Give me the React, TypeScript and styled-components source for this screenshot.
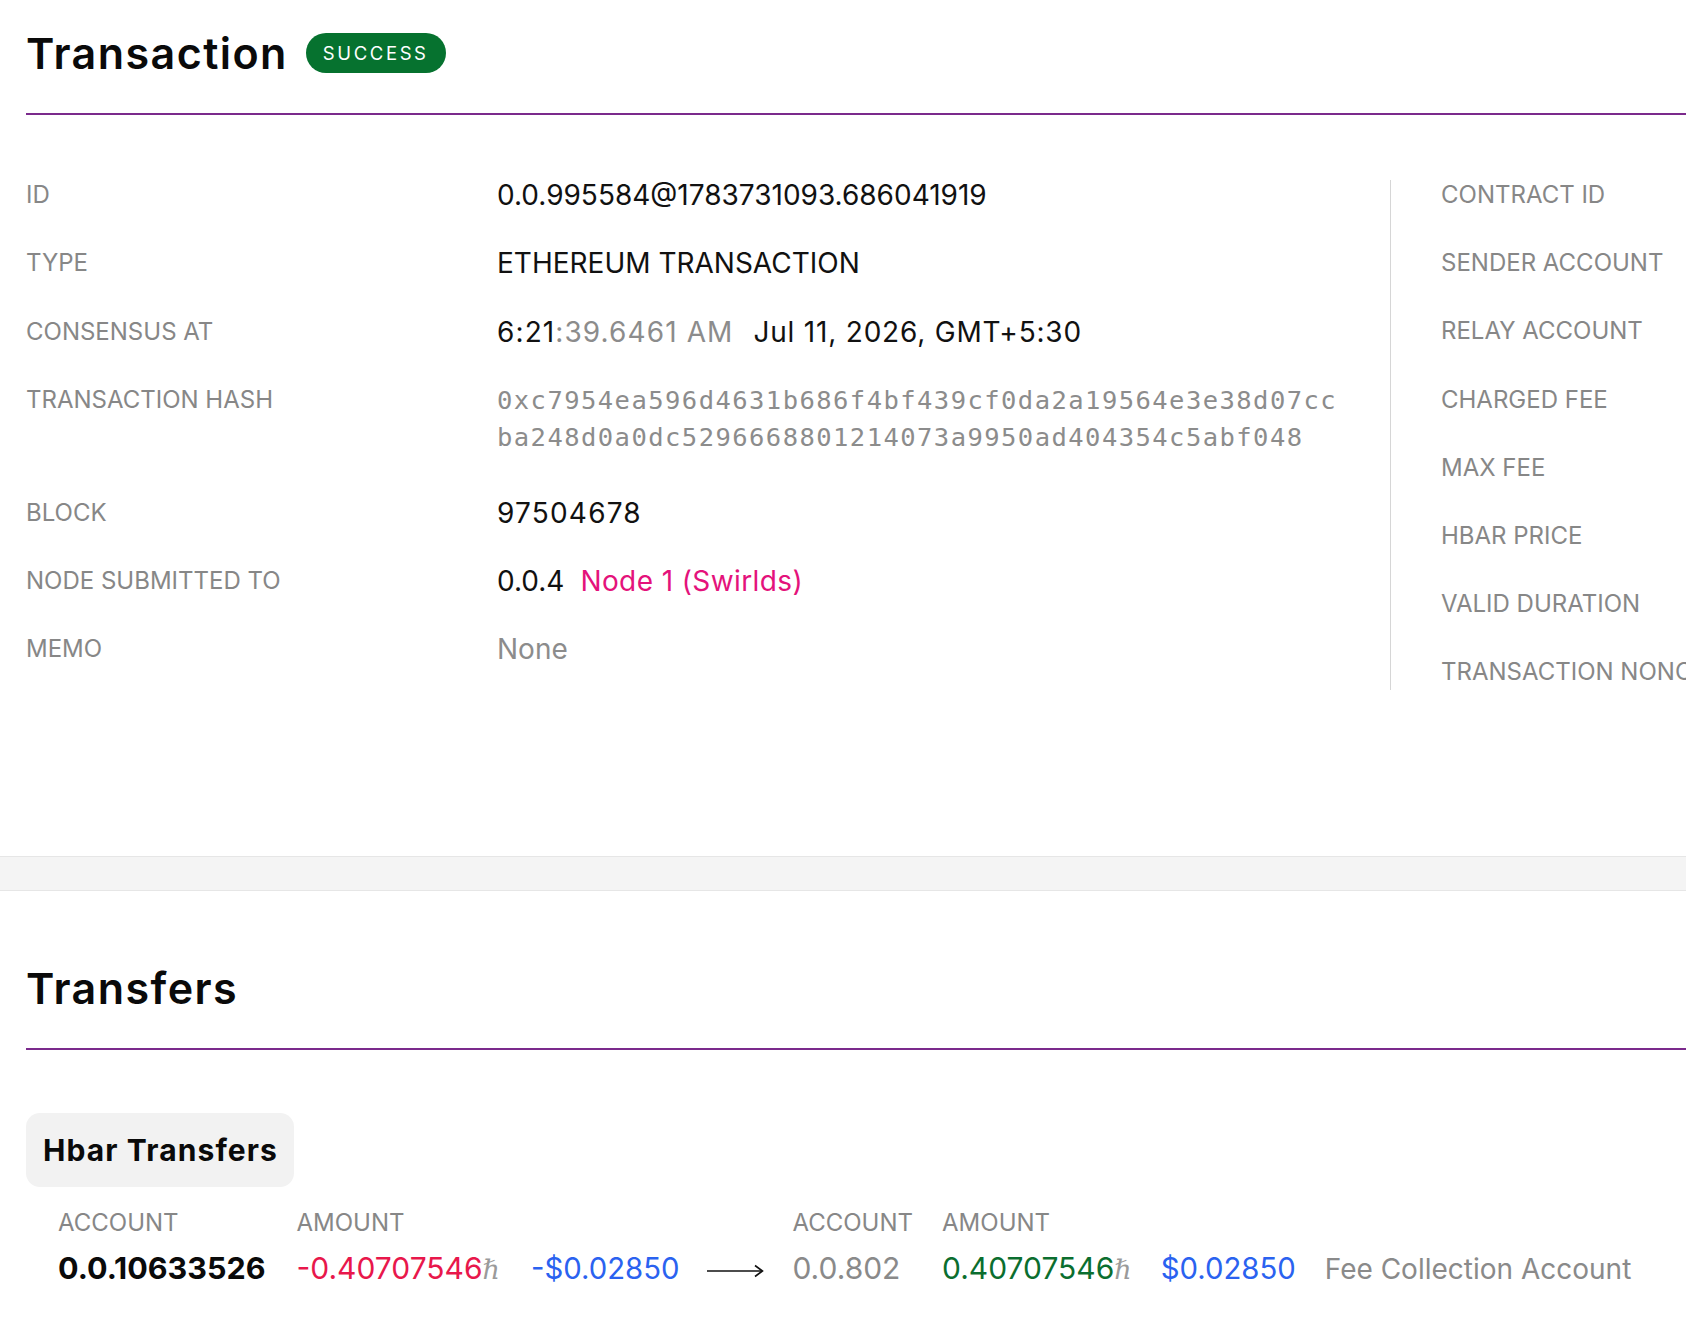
import styled, { createGlobalStyle } from "styled-components";

const GlobalStyle = createGlobalStyle`
  html, body {
    margin: 0;
    padding: 0;
    background: #ffffff;
  }
  body {
    font-family: Inter, "Noto Sans", "Liberation Sans", sans-serif;
    color: #111111;
  }
`;

const Page = styled.div`
  width: 100%;
  overflow: hidden;
  padding-bottom: 40px;
`;

const Section = styled.section`
  padding-left: 26px;
`;

const SectionHeader = styled.div<{ $top: number }>`
  display: flex;
  align-items: center;
  gap: 18px;
  padding-top: ${(p) => p.$top}px;
  padding-bottom: 35px;
  border-bottom: 2px solid #7b2a8c;
`;

const Title = styled.h1`
  margin: 0;
  font-size: 43px;
  line-height: 50px;
  font-weight: 600;
  letter-spacing: 1.45px;
  color: #0a0a0a;
`;

const Badge = styled.span`
  display: inline-flex;
  align-items: center;
  height: 40px;
  padding: 0 17px;
  border-radius: 20px;
  background: #06722f;
  color: #ffffff;
  font-size: 18.5px;
  font-weight: 400;
  letter-spacing: 2.6px;
`;

const Details = styled.div`
  display: flex;
  margin-top: 65px;
`;

const MainColumn = styled.div`
  flex: 0 0 1364px;
  display: grid;
  grid-template-columns: 471px 1fr;
  row-gap: 38.4px;
  align-content: start;
`;

const SideColumn = styled.div`
  flex: 0 0 600px;
  display: flex;
  flex-direction: column;
  gap: 38.2px;
  padding: 0 0 3px 50px;
  border-left: 1px solid #d6d6d6;
`;

const Label = styled.div`
  font-size: 24px;
  line-height: 30px;
  color: #878787;
  text-transform: uppercase;
  white-space: nowrap;
`;

const Value = styled.div<{ $spacing?: number }>`
  font-size: 28px;
  line-height: 30px;
  color: #111111;
  display: flex;
  align-items: baseline;
  white-space: nowrap;
  letter-spacing: ${(p) => p.$spacing ?? 0}px;
`;

const Muted = styled.span`
  color: #8c8c8c;
`;

const TimeText = styled.span`
  letter-spacing: 1.1px;
`;

const DateText = styled.span`
  margin-left: 20px;
  letter-spacing: 0.8px;
`;

const NodeLink = styled.a`
  margin-left: 16px;
  color: #e4127b;
  text-decoration: none;
  letter-spacing: 0.4px;
`;

const Hash = styled.div`
  font-family: "DejaVu Sans Mono", "Liberation Mono", monospace;
  font-size: 25.5px;
  line-height: 37px;
  letter-spacing: 1.45px;
  color: #8c8c8c;
  margin-top: -3px;
  margin-bottom: 3px;
`;

const Band = styled.div`
  margin-top: 166px;
  height: 33px;
  background: #f4f4f4;
  border-top: 1px solid #e6e6e6;
  border-bottom: 1px solid #e6e6e6;
`;

const Tab = styled.div`
  display: inline-flex;
  align-items: center;
  margin-top: 63px;
  height: 74px;
  padding: 0 16px 0 17px;
  border-radius: 14px;
  background: #f2f2f2;
  font-size: 30px;
  font-weight: 700;
  letter-spacing: 1.1px;
  color: #0a0a0a;
`;

const TransferRow = styled.div`
  display: flex;
  align-items: flex-start;
  gap: 28px;
  margin-top: 21px;
  padding-left: 32px;
`;

const TransferGrid = styled.div<{ $cols: number; $gap: number }>`
  display: grid;
  grid-template-columns: repeat(${(p) => p.$cols}, auto);
  column-gap: ${(p) => p.$gap}px;
  row-gap: 12px;
  align-items: baseline;
`;

const HeadCell = styled.div`
  font-size: 24px;
  line-height: 30px;
  color: #878787;
`;

type Tone = "account" | "muted" | "debit" | "credit" | "usd" | "note";

const toneColor: Record<Tone, string> = {
  account: "#0a0a0a",
  muted: "#8a8a8a",
  note: "#8a8a8a",
  debit: "#e8174b",
  credit: "#0b6e2f",
  usd: "#2a62f0",
};

const toneSize: Record<Tone, number> = {
  account: 30.5,
  muted: 30,
  note: 28,
  debit: 30,
  credit: 30,
  usd: 29.3,
};

const Cell = styled.div<{ $tone: Tone }>`
  font-size: ${(p) => toneSize[p.$tone]}px;
  line-height: 36px;
  white-space: nowrap;
  font-weight: ${(p) => (p.$tone === "account" ? 700 : 400)};
  color: ${(p) => toneColor[p.$tone]};
`;

const Hbar = styled.span`
  font-family: "DejaVu Serif", "Liberation Serif", serif;
  font-style: italic;
  color: #9a9a9a;
  font-size: 27px;
`;

const ArrowBox = styled.div`
  padding-top: 56px;
  display: flex;
`;

const sideLabels = [
  "Contract ID",
  "Sender Account",
  "Relay Account",
  "Charged Fee",
  "Max Fee",
  "HBAR Price",
  "Valid Duration",
  "Transaction Nonce",
];

function Arrow() {
  return (
    <svg width="57" height="14" viewBox="0 0 57 14" fill="none">
      <path d="M0 7H55" stroke="#111" strokeWidth="1.6" />
      <path d="M48 1.5L55.5 7L48 12.5" stroke="#111" strokeWidth="1.6" />
    </svg>
  );
}

export default function App() {
  return (
    <Page>
      <GlobalStyle />
      <Section>
        <SectionHeader $top={28}>
          <Title>Transaction</Title>
          <Badge>SUCCESS</Badge>
        </SectionHeader>
        <Details>
          <MainColumn>
            <Label>ID</Label>
            <Value>0.0.995584@1783731093.686041919</Value>

            <Label>Type</Label>
            <Value>ETHEREUM TRANSACTION</Value>

            <Label>Consensus at</Label>
            <Value>
              <TimeText>
                6:21<Muted>:39.6461 AM</Muted>
              </TimeText>
              <DateText>Jul 11, 2026, GMT+5:30</DateText>
            </Value>

            <Label>Transaction Hash</Label>
            <Hash>
              0xc7954ea596d4631b686f4bf439cf0da2a19564e3e38d07cc
              <br />
              ba248d0a0dc5296668801214073a9950ad404354c5abf048
            </Hash>

            <Label>Block</Label>
            <Value $spacing={1.2}>97504678</Value>

            <Label>Node Submitted To</Label>
            <Value>
              0.0.4<NodeLink href="#">Node 1 (Swirlds)</NodeLink>
            </Value>

            <Label>Memo</Label>
            <Value>
              <Muted>None</Muted>
            </Value>
          </MainColumn>
          <SideColumn>
            {sideLabels.map((l) => (
              <Label key={l}>{l}</Label>
            ))}
          </SideColumn>
        </Details>
      </Section>

      <Band />

      <Section>
        <SectionHeader $top={72}>
          <Title>Transfers</Title>
        </SectionHeader>
        <Tab>Hbar Transfers</Tab>
        <TransferRow>
          <TransferGrid $cols={3} $gap={31}>
            <HeadCell>ACCOUNT</HeadCell>
            <HeadCell>AMOUNT</HeadCell>
            <div />
            <Cell $tone="account">0.0.10633526</Cell>
            <Cell $tone="debit">
              -0.40707546<Hbar>ℏ</Hbar>
            </Cell>
            <Cell $tone="usd">-$0.02850</Cell>
          </TransferGrid>
          <ArrowBox>
            <Arrow />
          </ArrowBox>
          <TransferGrid $cols={4} $gap={29}>
            <HeadCell>ACCOUNT</HeadCell>
            <HeadCell>AMOUNT</HeadCell>
            <div />
            <div />
            <Cell $tone="muted">0.0.802</Cell>
            <Cell $tone="credit">
              0.40707546<Hbar>ℏ</Hbar>
            </Cell>
            <Cell $tone="usd">$0.02850</Cell>
            <Cell $tone="note">Fee Collection Account</Cell>
          </TransferGrid>
        </TransferRow>
      </Section>
    </Page>
  );
}
